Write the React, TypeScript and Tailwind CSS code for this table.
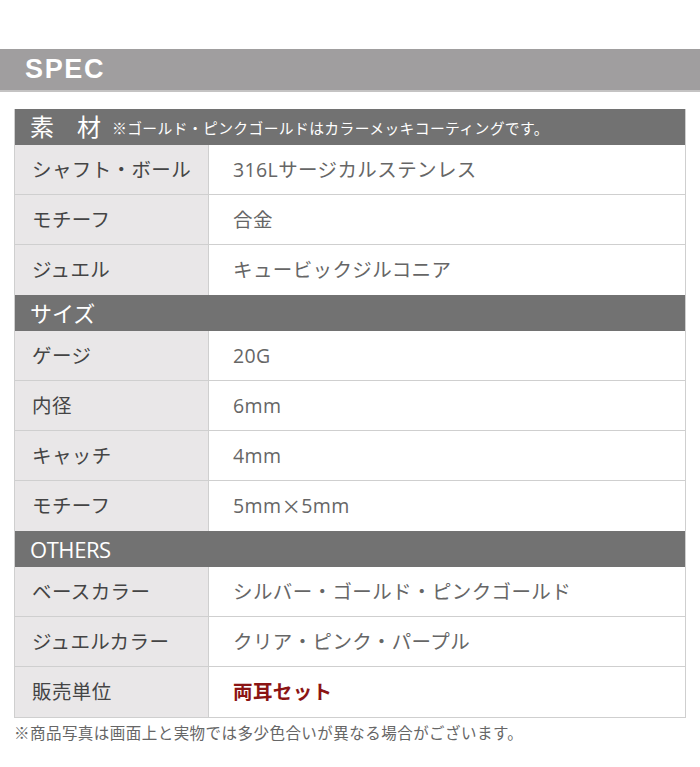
const font = { fontFamily: '"Open Sans", "Noto Sans CJK JP", sans-serif' };
const cjk = { fontFamily: '"Noto Sans CJK JP", sans-serif' };

type Row = { label: string; value: React.ReactNode; accent?: boolean };

const sections: { title: React.ReactNode; rows: Row[] }[] = [
  {
    title: (
      <span className="flex items-center">
        <span className="text-[24px]">素</span>
        <span className="text-[24px] ml-[23px]">材</span>
        <span className="text-[14.8px] tracking-[0.025em] ml-[11px] mt-[3px]">
          ※ゴールド・ピンクゴールドはカラーメッキコーティングです。
        </span>
      </span>
    ),
    rows: [
      { label: 'シャフト・ボール', value: '316Lサージカルステンレス' },
      { label: 'モチーフ', value: '合金' },
      { label: 'ジュエル', value: 'キュービックジルコニア' },
    ],
  },
  {
    title: <span className="text-[22px]">サイズ</span>,
    rows: [
      { label: 'ゲージ', value: '20G' },
      { label: '内径', value: '6mm' },
      { label: 'キャッチ', value: '4mm' },
      {
        label: 'モチーフ',
        value: (
          <>
            5mm<span style={cjk}>×</span>5mm
          </>
        ),
      },
    ],
  },
  {
    title: <span className="text-[22px] tracking-[-0.02em]">OTHERS</span>,
    rows: [
      { label: 'ベースカラー', value: 'シルバー・ゴールド・ピンクゴールド' },
      { label: 'ジュエルカラー', value: 'クリア・ピンク・パープル' },
      { label: '販売単位', value: '両耳セット', accent: true },
    ],
  },
];

export default function App() {
  return (
    <div className="w-[700px] h-[767px] bg-white" style={font}>
      <div className="h-[49px]" />
      <div className="h-[43px] bg-[#a09e9f] border-b-2 border-[#c4c3c3] flex items-center pl-[25px]">
        <span
          className="text-white text-[27px] font-bold tracking-[0.06em]"
          style={{ fontFamily: '"Liberation Sans", Arial, sans-serif' }}
        >
          SPEC
        </span>
      </div>

      <div className="mx-[14px] mt-[17px] border-x border-[#cfcfcf]">
        {sections.map((s, i) => (
          <div key={i}>
            <div className="h-[36px] bg-[#727272] text-white flex items-center pl-[15px] leading-none">
              {s.title}
            </div>
            {s.rows.map((r, j) => (
              <div
                key={j}
                className={`flex h-[50px] ${j < s.rows.length - 1 ? 'border-b border-[#cfcfcf]' : ''}`}
              >
                <div className="w-[194px] shrink-0 bg-[#e9e7e8] border-r border-[#cfcfcf] flex items-center pl-[17px] text-[19.5px] tracking-[0.02em] text-[#444]">
                  {r.label}
                </div>
                <div
                  className={`flex items-center pl-[24px] text-[19.5px] tracking-[0.02em] ${
                    r.accent ? 'text-[#8b1414] font-bold' : 'text-[#666]'
                  }`}
                >
                  {r.value}
                </div>
              </div>
            ))}
          </div>
        ))}
        <div className="border-b border-[#cfcfcf]" />
      </div>

      <p className="pl-[14px] mt-[4px] text-[15.5px] tracking-[0.03em] text-[#666]">
        ※商品写真は画面上と実物では多少色合いが異なる場合がございます。
      </p>
    </div>
  );
}
